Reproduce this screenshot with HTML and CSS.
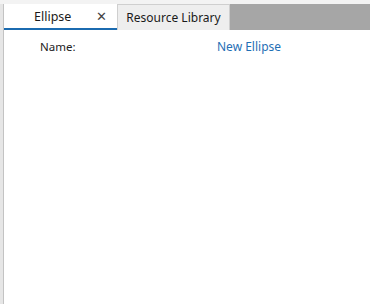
FILE: index.html
```html
<!DOCTYPE html>
<html>
<head>
<meta charset="utf-8">
<link rel="stylesheet" href="styles.css">
</head>
<body>
<div class="frame">
  <div class="side"></div>
  <div class="main">
    <div class="tabbar">
      <div class="tab active"><span class="tab-label">Ellipse</span><span class="close">✕</span></div>
      <div class="tab inactive"><span class="tab-label">Resource Library</span></div>
      <div class="fill"></div>
    </div>
    <div class="content">
      <div class="row">
        <span class="label">Name:</span>
        <span class="value">New Ellipse</span>
      </div>
    </div>
  </div>
</div>
</body>
</html>
```
FILE: styles.css
```css
html, body {
  margin: 0;
  padding: 0;
  background: #ffffff;
}
body {
  font-family: "Noto Sans", "Open Sans", sans-serif;
  font-size: 12px;
  color: #222222;
}
.frame {
  display: flex;
  width: 370px;
  height: 304px;
  background: #f3f3f3;
  padding-top: 4px;
  box-sizing: border-box;
}
.side {
  width: 3px;
  flex: none;
  background: #e6e6e6;
  border-right: 1px solid #c3c3c3;
}
.main {
  flex: 1;
  display: flex;
  flex-direction: column;
  background: #ffffff;
}
.tabbar {
  display: flex;
  height: 26px;
  flex: none;
}
.tab {
  display: flex;
  align-items: center;
  box-sizing: border-box;
}
.tab.active {
  width: 113px;
  background: #ffffff;
  border-bottom: 2px solid #1b6bb0;
  padding-left: 30px;
  padding-right: 10px;
  justify-content: space-between;
}
.tab.active .tab-label {
  font-size: 12.5px;
  color: #1a1a1a;
}
.close {
  font-size: 13px;
  color: #444444;
}
.tab.inactive {
  width: 113px;
  background: #eeeeee;
  border: 1px solid #cfcfcf;
  border-bottom: none;
  justify-content: center;
}
.tab.inactive .tab-label {
  font-size: 12px;
  color: #1a1a1a;
}
.fill {
  flex: 1;
  background: #a6a6a6;
}
.content {
  flex: 1;
  padding-top: 8px;
}
.row {
  display: flex;
  align-items: center;
}
.label {
  width: 177px;
  padding-left: 36px;
  font-size: 11.5px;
  color: #222222;
}
.value {
  font-size: 12px;
  color: #1f6fb5;
}
```
